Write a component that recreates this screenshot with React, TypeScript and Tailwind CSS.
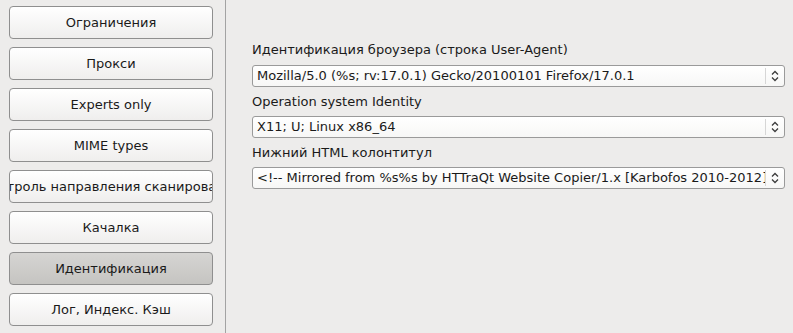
import React from 'react';

const buttons = [
  { id: 'limits', label: 'Ограничения' },
  { id: 'proxy', label: 'Прокси' },
  { id: 'experts', label: 'Experts only' },
  { id: 'mime', label: 'MIME types' },
  { id: 'scan', label: 'Контроль направления сканирования' },
  { id: 'download', label: 'Качалка' },
  { id: 'ident', label: 'Идентификация' },
  { id: 'log', label: 'Лог, Индекс. Кэш' },
];

const Arrows = () => (
  <svg width="8" height="12" viewBox="0 0 8 12" className="text-[#3c3c3c]">
    <path d="M1 4.5 L4 1.5 L7 4.5" fill="none" stroke="currentColor" strokeWidth="1.3" />
    <path d="M1 7.5 L4 10.5 L7 7.5" fill="none" stroke="currentColor" strokeWidth="1.3" />
  </svg>
);

const Combo = ({ value }: { value: string }) => (
  <div className="flex h-[22px] w-full items-center rounded-[3px] border border-[#9a9a9a] bg-gradient-to-b from-white to-[#f7f7f6]">
    <div className="min-w-0 flex-1 overflow-hidden whitespace-nowrap pl-[4px] text-[#1a1a1a]">{value}</div>
    <div className="flex h-[16px] w-[19px] shrink-0 items-center justify-center border-l border-[#d6d6d6]">
      <Arrows />
    </div>
  </div>
);

export default function App() {
  const current = 'ident';
  return (
    <div
      className="flex h-[333px] w-[793px] overflow-hidden bg-[#edeceb] text-[13px] text-[#1a1a1a]"
      style={{ fontFamily: '"DejaVu Sans", sans-serif' }}
    >
      <aside className="flex w-[225px] shrink-0 flex-col gap-[8px] pl-[9px] pr-[12px] pt-[6px]">
        {buttons.map((b) => {
          const active = b.id === current;
          return (
            <button
              key={b.id}
              className={`flex h-[33px] w-[204px] shrink-0 items-center justify-center overflow-hidden whitespace-nowrap rounded-[4px] border border-[#8f8f8f] ${
                active
                  ? 'bg-gradient-to-b from-[#d6d5d3] to-[#c5c4c1]'
                  : 'bg-gradient-to-b from-white to-[#efeeed]'
              }`}
            >
              {b.label}
            </button>
          );
        })}
      </aside>
      <div className="w-px shrink-0 bg-[#a3a3a3]" />
      <main className="flex min-w-0 flex-1 flex-col pl-[26px] pr-[8px] pt-[41px]">
        <div className="h-[17px] leading-[17px]">Идентификация броузера (строка User-Agent)</div>
        <div className="mt-[7px]">
          <Combo value="Mozilla/5.0 (%s; rv:17.0.1) Gecko/20100101 Firefox/17.0.1" />
        </div>
        <div className="mt-[6px] h-[17px] leading-[17px]">Operation system Identity</div>
        <div className="mt-[6px]">
          <Combo value="X11; U; Linux x86_64" />
        </div>
        <div className="mt-[6px] h-[17px] leading-[17px]">Нижний HTML колонтитул</div>
        <div className="mt-[6px]">
          <Combo value="<!-- Mirrored from %s%s by HTTraQt Website Copier/1.x [Karbofos 2010-2012] %s -->" />
        </div>
      </main>
    </div>
  );
}
